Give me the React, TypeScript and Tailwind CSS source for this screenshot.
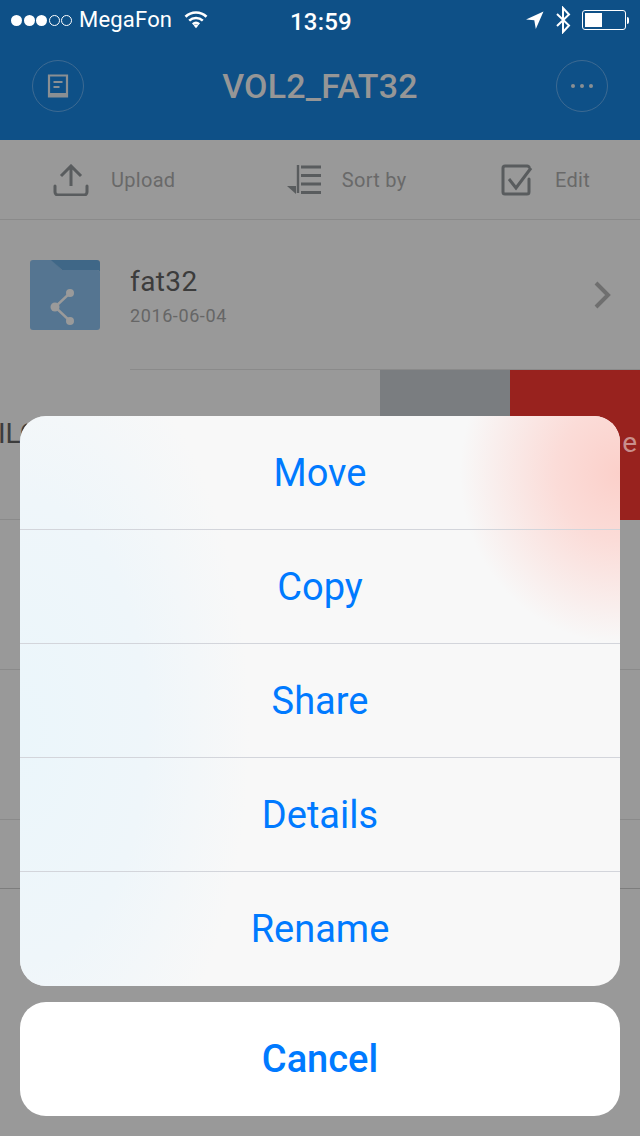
const font = "font-['Roboto',sans-serif]";

function Dots() {
  return (
    <div className="flex items-center gap-[1.5px]">
      {[0, 1, 2].map((i) => (
        <span key={i} className="w-[11px] h-[11px] rounded-full bg-white" />
      ))}
      {[0, 1].map((i) => (
        <span key={i} className="w-[11px] h-[11px] rounded-full border border-white" />
      ))}
    </div>
  );
}

function StatusBar() {
  return (
    <div className="h-[40px] flex items-center text-white relative pl-[11px] pr-[11px]">
      <Dots />
      <span className="ml-[7px] text-[22px] leading-none tracking-[0.2px]">MegaFon</span>
      <svg width="24" height="20" viewBox="0 0 24 20" className="ml-[12px]" fill="none" stroke="white" strokeWidth="2.6">
        <path d="M1.5 6.8a15 15 0 0 1 21 0" />
        <path d="M5.2 10.6a10 10 0 0 1 13.6 0" />
        <path d="M8.8 14.2a5 5 0 0 1 6.4 0" />
        <path d="M9.7 15.6L12 18.2l2.3-2.6a3.4 3.4 0 0 0-4.6 0z" fill="white" stroke="none" />
      </svg>
      <span className="absolute left-[290px] top-[8px] text-[24px] leading-[28px] font-medium tracking-[0.2px]">13:59</span>
      <div className="ml-auto flex items-center">
        <svg width="18" height="18" viewBox="0 0 18 18" fill="white">
          <path d="M17.5.5L0 8.4l8.3.9L9.8 18z" />
        </svg>
        <svg width="16" height="28" viewBox="0 0 16 28" className="ml-[11px]" fill="none" stroke="white" strokeWidth="2">
          <path d="M2 8l12 11.5L8 26V2l6 6.5L2 20" />
        </svg>
        <div className="ml-[11px] w-[44px] h-[20px] border border-white rounded-[3px] p-[2px] flex">
          <div className="w-[17px] bg-white" />
        </div>
        <div className="w-[2px] h-[7px] bg-white rounded-r-sm ml-[1px]" />
      </div>
    </div>
  );
}

function Header() {
  return (
    <div className="h-[100px] flex items-start justify-between px-[32px] pt-[20px]">
      <div className="w-[52px] h-[52px] rounded-full border border-[#3d6a92] flex items-center justify-center">
        <svg width="22" height="24" viewBox="0 0 22 24" fill="none" stroke="#8a8f93" strokeWidth="2.2">
          <path d="M2 1.5h18v21H2z" />
          <path d="M6.5 8h9M6.5 13h6" />
          <path d="M2 20.5h18" strokeWidth="3" />
        </svg>
      </div>
      <span className="text-[34px] leading-[52px] font-medium text-[#969696] tracking-[0.2px]">VOL2_FAT32</span>
      <div className="w-[52px] h-[52px] rounded-full border border-[#3d6a92] flex items-center justify-center gap-[5px]">
        {[0, 1, 2].map((i) => (
          <span key={i} className="w-[4px] h-[4px] rounded-full bg-[#8a8f93]" />
        ))}
      </div>
    </div>
  );
}

function Toolbar() {
  const text = "text-[20px] leading-none text-[#696969] tracking-[0.3px]";
  return (
    <div className="h-[80px] border-b border-[#8a8a8a] flex items-center pl-[53px] pr-[50px] justify-between">
      <div className="flex items-center">
        <svg width="36" height="32" viewBox="0 0 36 32" fill="none" stroke="#595c5e" strokeWidth="3">
          <path d="M18 22V3M8 12l10-10 10 10" />
          <path d="M2 22v6a3 3 0 0 0 3 3h26a3 3 0 0 0 3-3v-6" strokeLinecap="round" />
        </svg>
        <span className={`${text} ml-[22px]`}>Upload</span>
      </div>
      <div className="flex items-center ml-[16px]">
        <svg width="36" height="30" viewBox="0 0 36 30" fill="none" stroke="#595c5e" strokeWidth="3">
          <path d="M12 0v28" strokeWidth="2.4" />
          <path d="M1 21l9 8v-8z" fill="#595c5e" stroke="none" />
          <path d="M15 2h20M15 10.500h20M15 19h20M15 27.500h20" />
        </svg>
        <span className={`${text} ml-[20px]`}>Sort by</span>
      </div>
      <div className="flex items-center">
        <svg width="32" height="32" viewBox="0 0 32 32" fill="none" stroke="#595c5e" strokeWidth="3">
          <path d="M28 15v13a2 2 0 0 1-2 2H4a2 2 0 0 1-2-2V4a2 2 0 0 1 2-2h22a2 2 0 0 1 2 1" strokeLinecap="round" />
          <path d="M8 15l7 9L30 4" />
        </svg>
        <span className={`${text} ml-[22px]`}>Edit</span>
      </div>
    </div>
  );
}

function FolderRow() {
  return (
    <div className="h-[150px] flex">
      <div className="w-[130px] pl-[30px] pt-[40px]">
        <svg width="70" height="70" viewBox="0 0 70 70">
          <path d="M3 0h19l10 10h35a3 3 0 0 1 3 3v54a3 3 0 0 1-3 3H3a3 3 0 0 1-3-3V3a3 3 0 0 1 3-3z" fill="#557591" />
          <path d="M21 0h46a3 3 0 0 1 3 3v9a3 3 0 0 0-3-2H32z" fill="#3f6787" />
          <path d="M40 33L25 47l15 14" fill="none" stroke="#9a9a9a" strokeWidth="2.4" />
          <circle cx="40" cy="33" r="4" fill="#9a9a9a" />
          <circle cx="25" cy="47" r="4.500" fill="#9a9a9a" />
          <circle cx="40" cy="61" r="4" fill="#9a9a9a" />
        </svg>
      </div>
      <div className="flex-1 border-b border-[#8a8a8a] flex items-start">
        <div className="flex-1 pt-[46px]">
          <div className="text-[28px] leading-[32px] text-[#3c3c3c] tracking-[0.4px]">fat32</div>
          <div className="text-[18px] leading-[22px] mt-[7px] text-[#666666] tracking-[0.6px]">2016-06-04</div>
        </div>
        <svg width="18" height="28" viewBox="0 0 18 28" className="mt-[61px] mr-[29px]" fill="none" stroke="#6f6f6f" strokeWidth="4">
          <path d="M3 2l12 12L3 26" />
        </svg>
      </div>
    </div>
  );
}

function SwipedRow() {
  return (
    <div className="h-[150px] flex border-b border-[#8a8a8a]">
      <div className="flex-1 overflow-hidden flex justify-end">
        <span className="pt-[48px] pr-[0px] text-[28px] leading-[32px] text-[#3c3c3c] w-[380px] -ml-[20px] pl-[0px]">
          <span className="block -ml-[2px]">ILC</span>
        </span>
      </div>
      <div className="w-[130px] bg-[#7a7d80] -mb-px" />
      <div className="w-[130px] bg-[#98221e] -mb-px flex justify-end items-start overflow-hidden">
        <span className="pt-[57px] pr-[3px] text-[28px] leading-[32px] text-[#c98f8c]">e</span>
      </div>
    </div>
  );
}

function TabBar() {
  const tabs = [
    ["Router", "text-[#3c3c3c]"],
    ["Storage", "text-[#144f80]"],
    ["Online", "text-[#3c3c3c]"],
    ["Plug-ins", "text-[#3c3c3c]"],
  ];
  return (
    <div className="h-[99px] border-t border-[#7d7d7d] grid grid-cols-4 items-end pb-[7px]">
      {tabs.map(([t, c]) => (
        <span key={t} className={`text-center text-[20px] leading-[24px] ${c}`}>
          {t}
        </span>
      ))}
    </div>
  );
}

function Sheet() {
  const items = ["Move", "Copy", "Share", "Details", "Rename"];
  return (
    <div className={`absolute left-[20px] right-[20px] top-[416px] flex flex-col gap-[16px] ${font}`}>
      <div className="relative h-[570px] rounded-[26px] overflow-hidden bg-[#f8f8f8]">
        <div className="absolute inset-0 bg-[radial-gradient(ellipse_160px_170px_at_100%_10%,#fbd0ca_0%,#fbdcd8_40%,#f8f8f800_100%)]" />
        <div className="absolute inset-0 bg-[radial-gradient(ellipse_230px_420px_at_0%_55%,#ebf6fb_0%,#eff6fa_55%,#f8f8f800_100%)]" />
        <div className="relative flex flex-col">
          {items.map((t, i) => (
            <div
              key={t}
              className={`h-[114px] flex items-center justify-center text-[38px] leading-none text-[#007aff] ${
                i < 4 ? "border-b border-[#d3d5db]" : ""
              }`}
            >
              {t}
            </div>
          ))}
        </div>
      </div>
      <div className="h-[114px] rounded-[26px] bg-white flex items-center justify-center text-[38px] leading-none font-medium text-[#007aff]">
        Cancel
      </div>
    </div>
  );
}

export default function App() {
  return (
    <div className={`relative w-[640px] h-[1136px] overflow-hidden bg-[#999999] ${font}`}>
      <div className="bg-[#0e5087] h-[140px]">
        <StatusBar />
        <Header />
      </div>
      <Toolbar />
      <FolderRow />
      <SwipedRow />
      <div className="h-[150px] border-b border-[#8a8a8a]" />
      <div className="h-[150px] border-b border-[#8a8a8a]" />
      <div className="h-[68px] border-b-0" />
      <TabBar />
      <Sheet />
    </div>
  );
}
